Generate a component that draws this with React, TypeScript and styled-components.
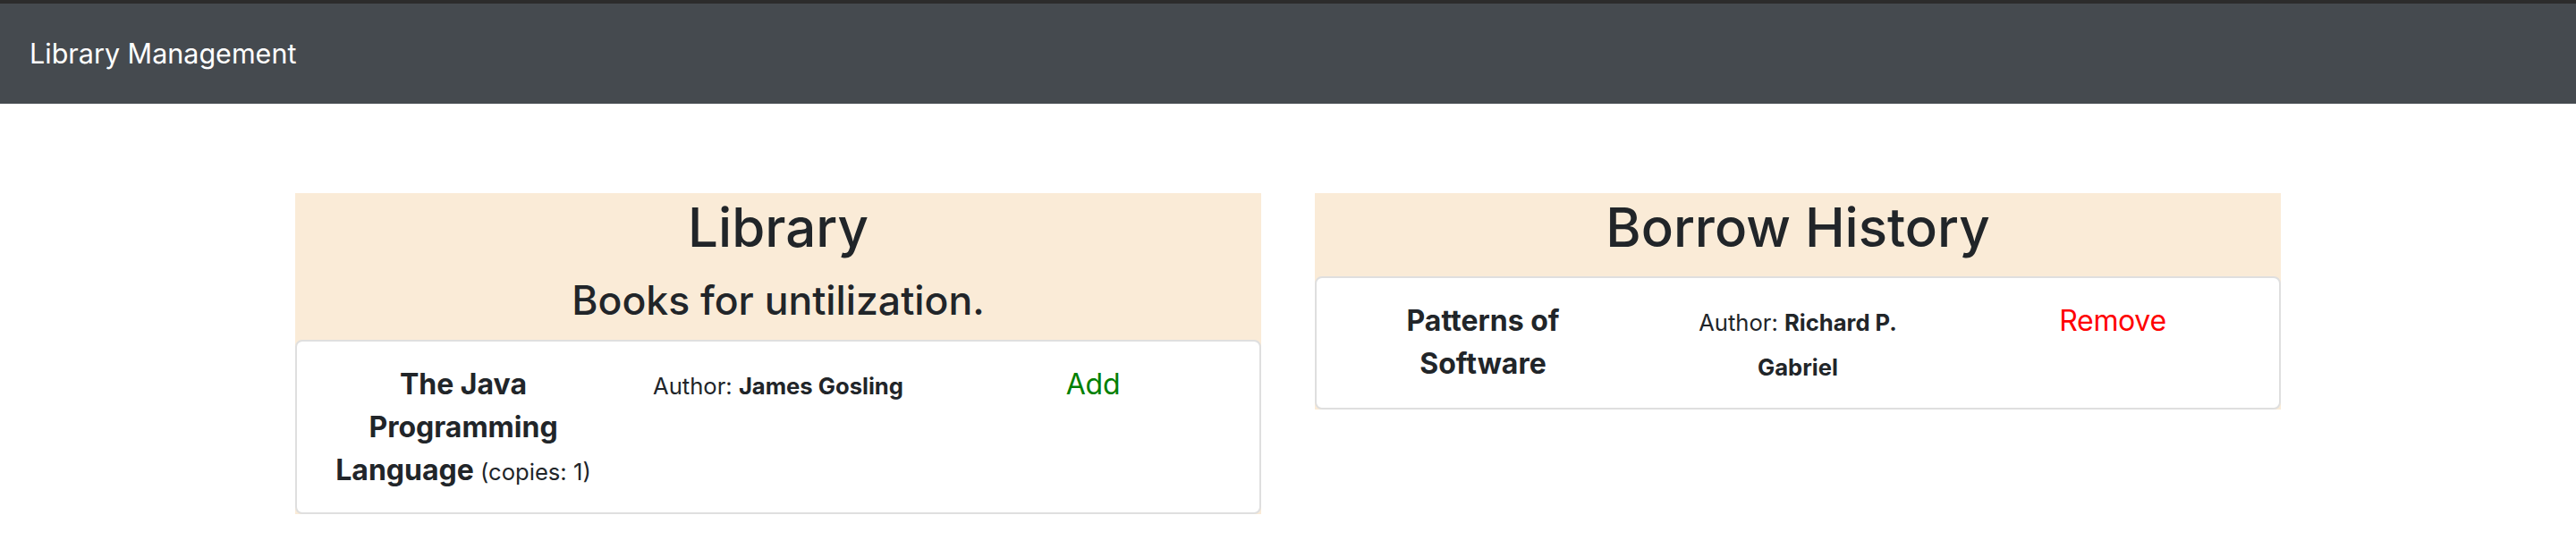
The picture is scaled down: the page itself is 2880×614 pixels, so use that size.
import React from "react";
import styled, { createGlobalStyle } from "styled-components";

const GlobalStyle = createGlobalStyle`
  body {
    margin: 0;
    font-family: Inter, "Noto Sans", "Liberation Sans", sans-serif;
    color: #212529;
    background: #fff;
  }
`;

const NavBar = styled.nav`
  height: 112px;
  border-top: 4px solid #2c2c2c;
  background: #454a4f;
  display: flex;
  align-items: center;
  padding: 0 33px;
`;

const Brand = styled.span`
  color: #fff;
  font-size: 30.5px;
  line-height: 1.5;
`;

const Container = styled.main`
  width: 2280px;
  margin: 100px auto 0;
  display: grid;
  grid-template-columns: 1fr 1fr;
`;

const Column = styled.section`
  padding: 0 30px;
`;

const Panel = styled.div`
  background: #faebd7;
  text-align: center;
`;

const Title = styled.h1`
  margin: 0 0 16px;
  font-size: 60px;
  font-weight: 500;
  line-height: 77px;
`;

const SubTitle = styled.h4`
  margin: 0 0 16px;
  font-size: 44.5px;
  font-weight: 500;
  line-height: 55px;
`;

const Card = styled.div`
  background: #fff;
  border: 2px solid #dfdfdf;
  border-radius: 8px;
  padding: 24px 10px 21px;
  display: grid;
  grid-template-columns: repeat(3, 1fr);
  text-align: center;
`;

const Cell = styled.div`
  padding: 0 30px;
  font-size: 32px;
  line-height: 48px;
`;

const BookName = styled.b`
  font-weight: 700;
`;

const Small = styled.small`
  font-size: 80%;
`;

const Action = styled.span<{ $tone: "add" | "remove" }>`
  color: ${(p) => (p.$tone === "add" ? "#008000" : "#ff0000")};
  letter-spacing: -0.01em;
  cursor: pointer;
`;

interface Book {
  title: string;
  author: string;
  copies?: number;
}

const BookRow: React.FC<{ book: Book; action: "add" | "remove" }> = ({
  book,
  action,
}) => (
  <Card>
    <Cell>
      <BookName>{book.title}</BookName>
      {book.copies !== undefined && <Small> (copies: {book.copies})</Small>}
    </Cell>
    <Cell>
      <Small>
        Author: <b>{book.author}</b>
      </Small>
    </Cell>
    <Cell>
      <Action $tone={action}>{action === "add" ? "Add" : "Remove"}</Action>
    </Cell>
  </Card>
);

const library: Book[] = [
  { title: "The Java Programming Language", author: "James Gosling", copies: 1 },
];

const history: Book[] = [
  { title: "Patterns of Software", author: "Richard P. Gabriel" },
];

export default function App() {
  return (
    <>
      <GlobalStyle />
      <NavBar>
        <Brand>Library Management</Brand>
      </NavBar>
      <Container>
        <Column>
          <Panel>
            <Title>Library</Title>
            <SubTitle>Books for untilization.</SubTitle>
            {library.map((b) => (
              <BookRow key={b.title} book={b} action="add" />
            ))}
          </Panel>
        </Column>
        <Column>
          <Panel>
            <Title>Borrow History</Title>
            {history.map((b) => (
              <BookRow key={b.title} book={b} action="remove" />
            ))}
          </Panel>
        </Column>
      </Container>
    </>
  );
}
